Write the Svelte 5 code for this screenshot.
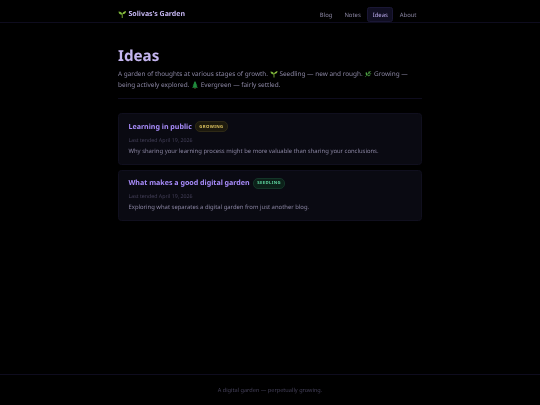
<script>
  const ideas = [
    { title: 'Learning in public', stage: 'growing', date: 'April 19, 2026', text: 'Why sharing your learning process might be more valuable than sharing your conclusions.' },
    { title: 'What makes a good digital garden', stage: 'seedling', date: 'April 19, 2026', text: 'Exploring what separates a digital garden from just another blog.' }
  ];
</script>

{#snippet sprout()}
  <svg class="emoji" viewBox="0 0 16 16"><path d="M8 15V8" stroke="#6b9a2e" stroke-width="2" fill="none"/><path d="M8 9C8 5 5 3 1 3c0 4 3 6 7 6z" fill="#7cb53a"/><path d="M8 8c0-3 3-5 7-6 0 4-3 6-7 6z" fill="#8fc540"/></svg>
{/snippet}
{#snippet herb()}
  <svg class="emoji" viewBox="0 0 16 16"><path d="M2 14C6 10 10 7 14 2" stroke="#3f8f3a" stroke-width="1.2" fill="none"/><path d="M5 11C3 9 3 6 4 4c2 1 3 3 3 5zM8 8c0-2 1-4 2-6 2 1 2 3 1 4zM6 11c2-1 5-1 7 0-2 2-5 2-7 0zM9 8c2-1 4-1 6-1-1 2-4 2-6 1z" fill="#4fa345"/></svg>
{/snippet}
{#snippet tree()}
  <svg class="emoji" viewBox="0 0 16 16"><path d="M7 13h2v3H7z" fill="#6b4a2a"/><path d="M8 0l3 5H9.800l3 4h-2l3 4.500H2.200L5.200 9h-2l3-4H5z" fill="#1f8a3c"/></svg>
{/snippet}

<div class="page">
  <header>
    <div class="bar">
      <a class="brand" href="#top">{@render sprout()}<span>Solivas's Garden</span></a>
      <nav>
        <a href="#blog">Blog</a>
        <a href="#notes">Notes</a>
        <a href="#ideas" class="active">Ideas</a>
        <a href="#about">About</a>
      </nav>
    </div>
  </header>

  <main>
    <h1>Ideas</h1>
    <p class="intro">A garden of thoughts at various stages of growth. {@render sprout()} Seedling — new and rough. {@render herb()} Growing — being actively explored. {@render tree()} Evergreen — fairly settled.</p>
    <hr />
    <div class="list">
      {#each ideas as idea}
        <article>
          <div class="head">
            <h2>{idea.title}</h2>
            <span class="badge {idea.stage}">{idea.stage}</span>
          </div>
          <div class="date">Last tended {idea.date}</div>
          <p>{idea.text}</p>
        </article>
      {/each}
    </div>
  </main>

  <footer>A digital garden — perpetually growing.</footer>
</div>

<style>
  :global(body) {
    margin: 0;
    background: #000;
  }
  .page {
    height: 405px;
    display: flex;
    flex-direction: column;
    font-family: "Noto Sans", sans-serif;
    text-rendering: geometricPrecision;
    overflow: hidden;
    filter: blur(0.25px);
  }
  a { text-decoration: none; }
  header {
    height: 22.500px;
    border-bottom: 0.5px solid #0e0c1e;
    box-sizing: border-box;
  }
  .bar {
    width: 304px;
    margin: 0 auto;
    height: 100%;
    padding-top: 6.500px;
    box-sizing: border-box;
    display: flex;
    justify-content: space-between;
    align-items: flex-start;
  }
  .brand {
    display: flex;
    align-items: center;
    gap: 2px;
    color: #c4b5f0;
    font-size: 7px;
    font-weight: 700;
    height: 15px;
  }
  .brand .emoji { width: 8.500px; height: 8.500px; }
  nav {
    display: flex;
    gap: 1px;
  }
  nav a {
    color: #8b86a3;
    font-size: 5.900px;
    height: 15px;
    line-height: 15px;
    padding: 0 4.500px;
    border: 0.5px solid transparent;
    box-sizing: border-box;
    border-radius: 2.500px;
  }
  nav a.active {
    color: #b9a9ec;
    background: #100e22;
    border-color: #1a1735;
  }
  main {
    flex: 1;
    width: 304px;
    margin: 0 auto;
  }
  h1 {
    margin: 23.500px 0 0;
    color: #c4b5f0;
    font-size: 15.200px;
    font-weight: 700;
    line-height: 20px;
  }
  .intro {
    margin: 2px 0 0;
    color: #8b86a3;
    font-size: 6.450px;
    line-height: 11px;
  }
  .emoji {
    width: 8px;
    height: 8px;
    vertical-align: -1.500px;
    flex: none;
  }
  hr {
    border: 0;
    border-top: 0.5px solid #0e0c1e;
    margin: 8px 0 14px;
  }
  .list {
    display: flex;
    flex-direction: column;
    gap: 5px;
  }
  article {
    background: #0a0a12;
    border: 0.5px solid #100f1e;
    border-radius: 3.400px;
    padding: 6.500px 9.500px 7px;
    height: 51.500px;
    box-sizing: border-box;
  }
  .head {
    display: flex;
    align-items: center;
    gap: 3.500px;
    height: 12px;
  }
  h2 {
    margin: 0;
    color: #a78bfa;
    font-size: 7.100px;
    font-weight: 700;
  }
  .badge {
    font-size: 4.300px;
    font-weight: 700;
    text-transform: uppercase;
    letter-spacing: 0.35px;
    padding: 1.500px 3px;
    border-radius: 5px;
    line-height: 6px;
  }
  .growing {
    color: #dcc25f;
    background: #1d1a0e;
    border: 0.5px solid #2e2916;
  }
  .seedling {
    color: #5fd6a0;
    background: #0c2119;
    border: 0.5px solid #143528;
  }
  .date {
    margin-top: 3px;
    color: #45415a;
    font-size: 5.250px;
    line-height: 8px;
  }
  article p {
    margin: 3px 0 0;
    color: #8b86a3;
    font-size: 5.900px;
    line-height: 9px;
  }
  footer {
    height: 31px;
    border-top: 0.5px solid #0e0c1e;
    box-sizing: border-box;
    text-align: center;
    color: #45415a;
    font-size: 5.600px;
    padding-top: 10.500px;
    line-height: 9px;
  }
</style>
